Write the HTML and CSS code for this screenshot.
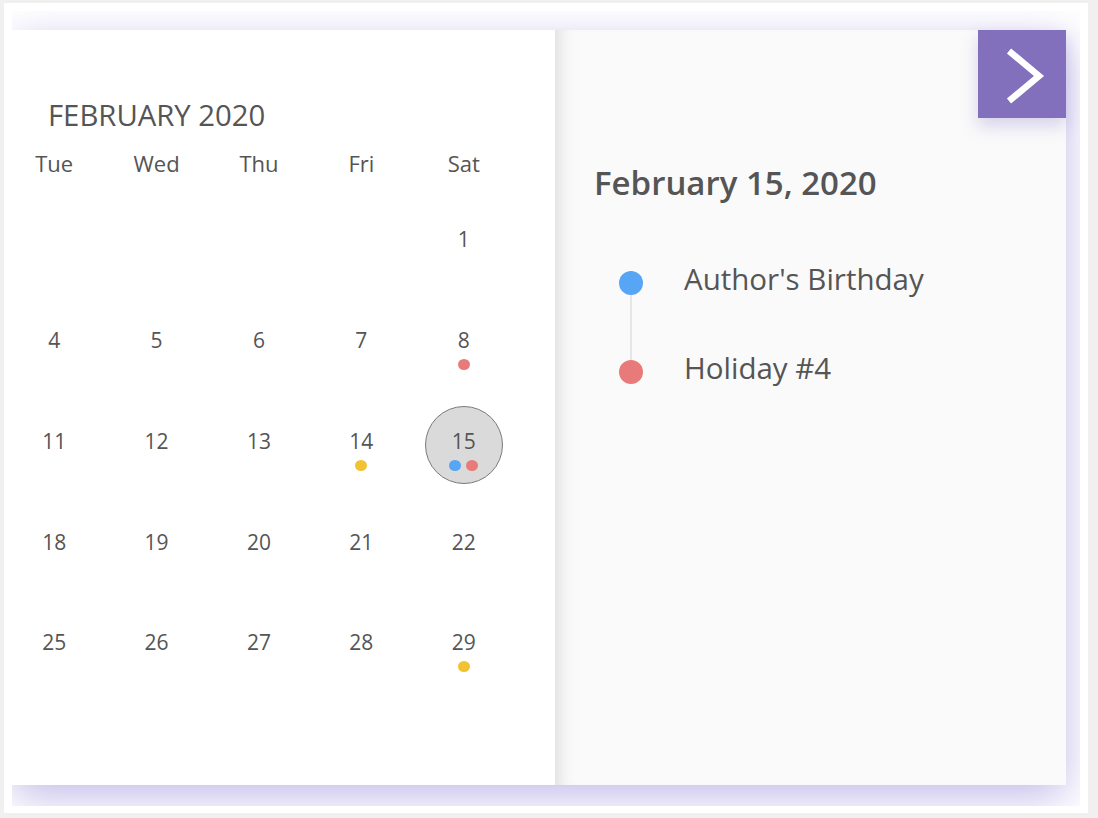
FILE: index.html
```html
<!DOCTYPE html>
<html>
<head>
<meta charset="utf-8">
<link rel="stylesheet" href="styles.css">
</head>
<body>
<div class="frame">
  <div class="clip">
    <div class="card">
      <section class="cal">
        <h2 class="month">FEBRUARY 2020</h2>
        <div class="weekdays">
          <div class="wd">Tue</div><div class="wd">Wed</div><div class="wd">Thu</div><div class="wd">Fri</div><div class="wd">Sat</div>
        </div>
        <div class="days">
          <div class="cell"></div><div class="cell"></div><div class="cell"></div><div class="cell"></div>
          <div class="cell"><div class="day"><span class="num">1</span><span class="dots"></span></div></div>

          <div class="cell"><div class="day"><span class="num">4</span><span class="dots"></span></div></div>
          <div class="cell"><div class="day"><span class="num">5</span><span class="dots"></span></div></div>
          <div class="cell"><div class="day"><span class="num">6</span><span class="dots"></span></div></div>
          <div class="cell"><div class="day"><span class="num">7</span><span class="dots"></span></div></div>
          <div class="cell"><div class="day"><span class="num">8</span><span class="dots"><i class="dot red"></i></span></div></div>

          <div class="cell"><div class="day"><span class="num">11</span><span class="dots"></span></div></div>
          <div class="cell"><div class="day"><span class="num">12</span><span class="dots"></span></div></div>
          <div class="cell"><div class="day"><span class="num">13</span><span class="dots"></span></div></div>
          <div class="cell"><div class="day"><span class="num">14</span><span class="dots"><i class="dot yellow"></i></span></div></div>
          <div class="cell"><div class="day selected"><span class="num">15</span><span class="dots"><i class="dot blue"></i><i class="dot red"></i></span></div></div>

          <div class="cell"><div class="day"><span class="num">18</span><span class="dots"></span></div></div>
          <div class="cell"><div class="day"><span class="num">19</span><span class="dots"></span></div></div>
          <div class="cell"><div class="day"><span class="num">20</span><span class="dots"></span></div></div>
          <div class="cell"><div class="day"><span class="num">21</span><span class="dots"></span></div></div>
          <div class="cell"><div class="day"><span class="num">22</span><span class="dots"></span></div></div>

          <div class="cell"><div class="day"><span class="num">25</span><span class="dots"></span></div></div>
          <div class="cell"><div class="day"><span class="num">26</span><span class="dots"></span></div></div>
          <div class="cell"><div class="day"><span class="num">27</span><span class="dots"></span></div></div>
          <div class="cell"><div class="day"><span class="num">28</span><span class="dots"></span></div></div>
          <div class="cell"><div class="day"><span class="num">29</span><span class="dots"><i class="dot yellow"></i></span></div></div>
        </div>
      </section>
      <section class="detail">
        <button class="next" aria-label="Next">
          <svg width="88" height="88" viewBox="0 0 88 88"><path d="M31 21 L61 46 L31 71" fill="none" stroke="#fff" stroke-width="6.5"/></svg>
        </button>
        <h1 class="date-title">February 15, 2020</h1>
        <ul class="events">
          <li class="event">
            <span class="marker"><span class="bullet blue"></span><span class="stem"></span></span>
            <span class="label">Author's Birthday</span>
          </li>
          <li class="event">
            <span class="marker"><span class="bullet red"></span></span>
            <span class="label">Holiday #4</span>
          </li>
        </ul>
      </section>
    </div>
  </div>
</div>
</body>
</html>
```
FILE: styles.css
```css
html, body {
  margin: 0;
  background: #f0f0f0;
}
body {
  font-family: "Open Sans", Lato, sans-serif;
  color: #555;
}
.frame {
  margin: 3px 10px 5px 4px;
  background: #fff;
  padding: 8px 8px 7px 8px;
}
.clip {
  overflow: hidden;
  padding: 19px 14px 21px 0;
}
.card {
  display: flex;
  height: 755px;
  box-shadow: 0 12px 40px rgba(104, 88, 200, 0.4);
}
.cal {
  width: 543px;
  background: #fff;
  overflow: hidden;
}
.month {
  margin: 70px 0 0 36px;
  font-size: 29.3px;
  line-height: 30px;
  font-weight: 400;
  color: #555;
}
.weekdays {
  display: grid;
  grid-template-columns: repeat(5, 102.4px);
  margin: 20px 0 0 -9px;
}
.wd {
  text-align: center;
  font-size: 22px;
  line-height: 26px;
}
.days {
  display: grid;
  grid-template-columns: repeat(5, 102.4px);
  grid-auto-rows: 100.75px;
  margin: 17px 0 0 -9px;
}
.cell {
  display: flex;
  align-items: center;
  justify-content: center;
}
.day {
  box-sizing: border-box;
  width: 78px;
  height: 78px;
  border: 1px solid transparent;
  border-radius: 50%;
  display: flex;
  flex-direction: column;
  align-items: center;
  padding-top: 22px;
}
.day.selected {
  background: #dadada;
  border-color: #7a7a7a;
}
.num {
  font-size: 21px;
  line-height: 24px;
}
.dots {
  display: flex;
  gap: 5px;
  margin-top: 7px;
  height: 11px;
}
.dot {
  width: 12px;
  height: 11px;
  border-radius: 50%;
}
.red { background: #e87a7a; }
.blue { background: #57a5f5; }
.yellow { background: #f1c232; }

.detail {
  flex: 1;
  background: #fafafa;
  box-shadow: inset 16px 0 16px -12px rgba(0, 0, 0, 0.12);
  display: flex;
  flex-direction: column;
  padding-left: 40px;
}
.next {
  align-self: flex-end;
  width: 88px;
  height: 88px;
  padding: 0;
  border: 0;
  background: #8270bd;
  box-shadow: 0 8px 16px rgba(110, 90, 190, 0.25);
}
.next svg { display: block; }
.date-title {
  margin: 45px 0 0 -1px;
  font-size: 33px;
  line-height: 40px;
  font-weight: 600;
  color: #555;
}
.events {
  list-style: none;
  margin: 68px 0 0 24px;
  padding: 0;
}
.event {
  display: flex;
  align-items: flex-start;
  height: 89px;
}
.marker {
  width: 24px;
  display: flex;
  flex-direction: column;
  align-items: center;
  margin-right: 41px;
}
.bullet {
  width: 24px;
  height: 24px;
  border-radius: 50%;
}
.stem {
  width: 2px;
  height: 65px;
  background: #e6e6e6;
}
.label {
  font-size: 29.5px;
  line-height: 24px;
  margin-top: -4px;
}
```
